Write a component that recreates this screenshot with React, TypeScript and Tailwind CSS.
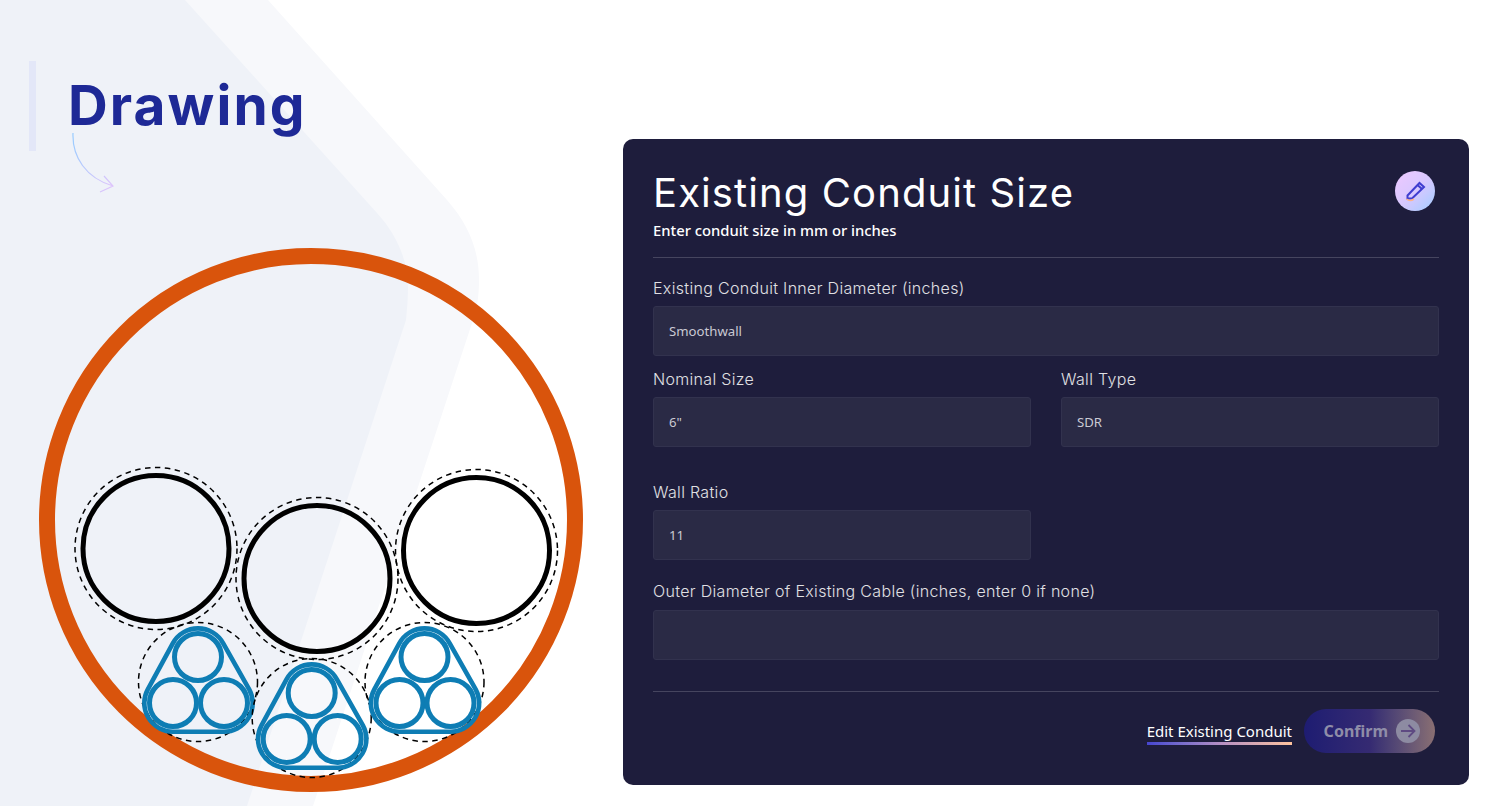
import React from 'react';

const headingFont = "font-['Inter','Noto_Sans',sans-serif]";
const bodyFont = "font-['Noto_Sans','Open_Sans',sans-serif]";

const Field: React.FC<{ label: string; value?: string; boxClass?: string }> = ({ label, value, boxClass }) => (
  <div className="flex flex-col">
    <label className={`${headingFont} text-[16px] leading-[20px] font-light tracking-[0.32px] text-[#e0e0e4]`}>{label}</label>
    <div className={`${bodyFont} ${boxClass ?? 'mt-2'} flex h-[50px] items-center rounded-[3px] border border-[#32324e] bg-[#2a2a45] px-[15px] pt-[1px] text-[13.2px] font-normal text-[#c9c9d3]`}>
      {value}
    </div>
  </div>
);

const Cable: React.FC<{ dx: number; dy: number }> = ({ dx, dy }) => (
  <g transform={`translate(${dx} ${dy})`}>
    <circle cx="198" cy="682" r="59.5" fill="none" stroke="#000" strokeWidth="1.5" strokeDasharray="5.5 4.5" />
    <path
      d="M172.8 643.3 A28.7 28.7 0 0 1 223.2 643.3 L249.2 689.3 A28.7 28.7 0 0 1 224 731.7 H173 A28.7 28.7 0 0 1 147.8 689.3 Z"
      fill="none"
      stroke="#0e7db4"
      strokeWidth="4.6"
    />
    <circle cx="198" cy="657" r="23.5" fill="none" stroke="#0e7db4" strokeWidth="5" />
    <circle cx="173" cy="703" r="23.5" fill="none" stroke="#0e7db4" strokeWidth="5" />
    <circle cx="224" cy="703" r="23.5" fill="none" stroke="#0e7db4" strokeWidth="5" />
  </g>
);

const Conduit: React.FC<{ cx: number; cy: number }> = ({ cx, cy }) => (
  <g>
    <circle cx={cx} cy={cy} r="81" fill="none" stroke="#000" strokeWidth="1.5" strokeDasharray="5.5 4.5" />
    <circle cx={cx} cy={cy} r="73" fill="none" stroke="#000" strokeWidth="5" />
  </g>
);

export default function App() {
  return (
    <div className="relative flex h-[806px] w-full overflow-hidden bg-white">
      {/* background shapes */}
      <svg className="absolute left-0 top-0" width="623" height="806" viewBox="0 0 623 806">
        <path d="M0 0 H268 L447 200 C470 226 479 252 479 280 C479 296 477 308 473 320 L313 806 H0 Z" fill="#f7f8fb" />
        <path d="M0 0 H185 L377 213 C398 236 408 262 408 287 C408 298 407 309 406 320 L247 806 H0 Z" fill="#eff2f8" />
      </svg>

      <div className="relative flex w-[623px] shrink-0 flex-col">
        <div className="ml-[29px] mt-[61px] h-[90px] border-l-[7px] border-[#e3e7f8] pl-[32px]">
          <h1 className={`${headingFont} text-[55px] leading-[88px] font-bold tracking-[2.1px] text-[#1e2996]`}>Drawing</h1>
          <svg className="-mt-[16px] ml-[4px]" width="48" height="62" viewBox="0 0 48 62" fill="none">
            <defs>
              <linearGradient id="arrowGrad" x1="0" y1="0" x2="1" y2="1">
                <stop offset="0" stopColor="#97ccff" />
                <stop offset="1" stopColor="#e2c4fb" />
              </linearGradient>
            </defs>
            <path d="M1 0 C0 24 14 45 41 53 M32 43 L41 53 L28 59" stroke="url(#arrowGrad)" strokeWidth="1.2" />
          </svg>
        </div>
        <svg className="mt-[80px]" width="623" height="575" viewBox="0 231 623 575" fill="none">
          <circle cx="311" cy="520" r="264" stroke="#d9540c" strokeWidth="16" />
          <Conduit cx={156} cy={548.5} />
          <Conduit cx={317} cy={578.5} />
          <Conduit cx={476.5} cy={550.5} />
          <Cable dx={0} dy={0} />
          <Cable dx={113.7} dy={36} />
          <Cable dx={226.5} dy={0} />
        </svg>
      </div>

      <div className="relative mt-[139px] h-[646px] w-[846px] shrink-0 rounded-[10px] bg-[#1e1d3c] px-[30px]">
        <div className="relative h-[119px] border-b border-[#46455f] pt-[28px]">
          <h2 className={`${headingFont} text-[40px] leading-[52px] font-normal tracking-[1.1px] text-white`}>Existing Conduit Size</h2>
          <p className={`${bodyFont} mt-[1px] text-[14.8px] leading-[20px] font-medium text-white`}>Enter conduit size in mm or inches</p>
          <button className="absolute right-[4px] top-[32px] flex h-10 w-10 items-center justify-center rounded-full bg-gradient-to-br from-[#eec8ff] via-[#d8c8ff] to-[#a0ccff]">
            <svg width="22" height="22" viewBox="0 0 22 22" fill="none">
              <path d="M3.5 15.5 L15.5 3 L20 7 L8 18.5 L3.5 18.5 Z M13.5 5 L18 9" stroke="#3f3dd0" strokeWidth="2" />
              <path d="M2.5 19 Q6 22 10 19" stroke="#ffb48a" strokeWidth="1.6" />
            </svg>
          </button>
        </div>

        <div className="mt-[20px]">
          <Field label="Existing Conduit Inner Diameter (inches)" value="Smoothwall" />
        </div>
        <div className="mt-[13px] grid grid-cols-2 gap-x-[30px]">
          <Field label="Nominal Size" value={'6"'} />
          <Field label="Wall Type" value="SDR" />
        </div>
        <div className="mt-[35px] grid grid-cols-2 gap-x-[30px]">
          <Field label="Wall Ratio" value="11" />
        </div>
        <div className="mt-[21px]">
          <Field label="Outer Diameter of Existing Cable (inches, enter 0 if none)" boxClass="mt-[9px]" />
        </div>

        <div className="mt-[31px] flex items-center justify-end gap-3 border-t border-[#46455f] pr-[4px] pt-[17px]">
          <span className={`${bodyFont} relative pb-[1px] text-[15px] leading-[22px] font-normal text-white`}>
            Edit Existing Conduit
            <span className="absolute inset-x-0 -bottom-[2px] h-[3px] bg-gradient-to-r from-[#4745d0] via-[#b48ec4] to-[#ffc39c]" />
          </span>
          <button className={`${bodyFont} flex h-11 w-[131px] items-center justify-end gap-2 rounded-full bg-gradient-to-r from-[#1e1c72] via-[#352a72] to-[#8a6f72] pr-[15px] text-[16px] font-bold text-[#8f8da8]`}>
            Confirm
            <span className="flex h-6 w-6 items-center justify-center rounded-full bg-[#8d8ba2]">
              <svg width="18" height="18" viewBox="0 0 18 18" fill="none" stroke="#5e4a82" strokeWidth="1.8">
                <path d="M2 9 H15.5 M9.5 3 L15.5 9 L9.5 15" />
              </svg>
            </span>
          </button>
        </div>
      </div>
    </div>
  );
}
